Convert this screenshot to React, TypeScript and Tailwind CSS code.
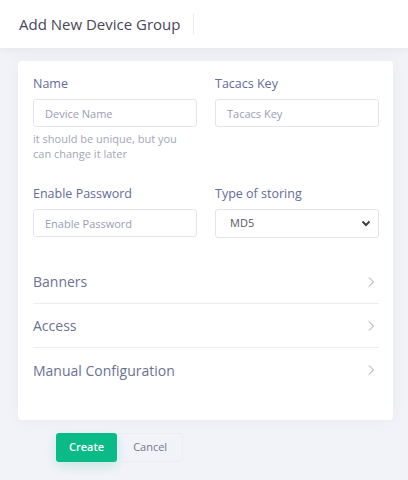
const font = { fontFamily: '"Open Sans", "Noto Sans", sans-serif' };

function Field({ label, placeholder, hint }: { label: string; placeholder: string; hint?: string }) {
  return (
    <div>
      <label className="mb-[6px] block text-[12.5px] leading-[19px] text-[#646c9a]">{label}</label>
      <input
        placeholder={placeholder}
        className="block h-[28px] w-full rounded-[3px] border border-[#e2e5ec] bg-white px-[11px] text-[11px] text-[#575962] placeholder:text-[#9a9db3] focus:outline-none"
      />
      {hint && <p className="mt-[4px] text-[11px] leading-[15px] text-[#a3a6b8]">{hint}</p>}
    </div>
  );
}

function Row({ title, last }: { title: string; last?: boolean }) {
  return (
    <div
      className={
        "flex h-[44px] items-center justify-between " + (last ? "" : "border-b border-[#ebedf2]")
      }
    >
      <span className="text-[14px] text-[#6c7293]">{title}</span>
      <svg width="8" height="12" viewBox="0 0 8 12" className="mr-[4px]">
        <path d="M2 1.5 L6.5 6 L2 10.5" fill="none" stroke="#9a9db3" strokeWidth="1" />
      </svg>
    </div>
  );
}

export default function App() {
  return (
    <div className="min-h-[480px] bg-[#f2f3f8]" style={font}>
      <header className="relative z-10 flex h-[48px] items-center bg-white pl-[19px] shadow-[0_2px_10px_rgba(82,63,105,0.08)]">
        <h1 className="text-[15px] font-medium text-[#48465b]">Add New Device Group</h1>
        <div className="ml-[12px] h-[20px] w-px bg-[#e7e8ef]" />
      </header>

      <div className="pl-[18px] pr-[15px] pt-[13px]">
        <div className="rounded-[4px] bg-white pl-[15px] pr-[14px] pb-[28px] pt-[13px] shadow-[0_0_13px_rgba(82,63,105,0.05)]">
          <div className="grid grid-cols-2 gap-x-[18px]">
            <Field label="Name" placeholder="Device Name" hint="it should be unique, but you can change it later" />
            <Field label="Tacacs Key" placeholder="Tacacs Key" />
          </div>
          <div className="mt-[23px] grid grid-cols-2 gap-x-[18px]">
            <Field label="Enable Password" placeholder="Enable Password" />
            <div>
              <label className="mb-[6px] block text-[12.5px] leading-[19px] text-[#646c9a]">Type of storing</label>
              <div className="flex h-[29px] items-center justify-between rounded-[3px] border border-[#e2e5ec] pl-[14px] pr-[7px] text-[11px] text-[#575962]">
                <span>MD5</span>
                <svg width="10" height="7" viewBox="0 0 10 7">
                  <path d="M1.5 1.5 L5 5 L8.5 1.5" fill="none" stroke="#3f4047" strokeWidth="2" />
                </svg>
              </div>
            </div>
          </div>

          <div className="mt-[22px]">
            <Row title="Banners" />
            <Row title="Access" />
            <Row title="Manual Configuration" last />
          </div>
        </div>

        <div className="mt-[13px] flex pl-[38px]">
          <button className="h-[29px] rounded-[3px] bg-[#0abb87] px-[13px] text-[11px] font-semibold text-white shadow-[0_4px_12px_rgba(10,187,135,0.2)]">
            Create
          </button>
          <button className="h-[29px] rounded-[3px] border border-[#ebedf2] px-[15px] text-[11px] text-[#74788d]">
            Cancel
          </button>
        </div>
      </div>
    </div>
  );
}
